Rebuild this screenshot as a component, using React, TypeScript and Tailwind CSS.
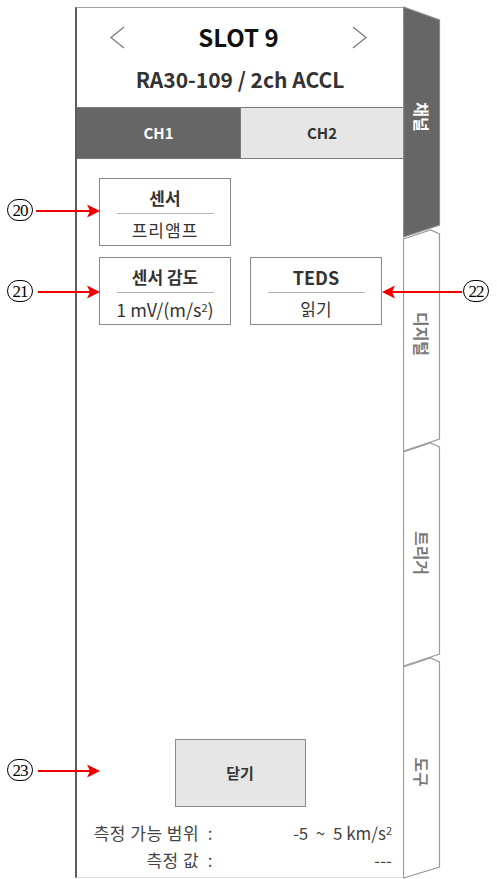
import type { ReactNode } from 'react'

const font = { fontFamily: '"Noto Sans CJK KR", "Noto Sans", sans-serif' }

const sideTabs = [
  { label: '채널', points: '0.5,7 36.5,20 36.5,225 0.5,237', cy: 117, active: true },
  { label: '디지털', points: '0.5,239 27.5,230 36.5,234 36.5,439 0.5,451', cy: 334, active: false },
  { label: '트리거', points: '0.5,452 27.5,443 36.5,447 36.5,654 0.5,666', cy: 553, active: false },
  { label: '도구', points: '0.5,667 27.5,658 36.5,662 36.5,867 0.5,878', cy: 772, active: false },
]

function Chevron({ dir }: { dir: 'left' | 'right' }) {
  return (
    <svg width="15" height="23" viewBox="0 0 15 23" className="shrink-0">
      <polyline
        points={dir === 'left' ? '14,1 1,11.5 14,22' : '1,1 14,11.5 1,22'}
        fill="none"
        stroke="#7a7a7a"
        strokeWidth="1.3"
      />
    </svg>
  )
}

function InfoBox({ title, value, titleClass = 'text-[17px]' }: { title: string; value: ReactNode; titleClass?: string }) {
  return (
    <div className="flex h-[68px] w-[132px] flex-col items-center border border-[#8a8a8a] bg-white pt-[8px]">
      <p className={`h-[22px] font-bold leading-[22px] text-[#333] ${titleClass}`}>{title}</p>
      <div className="mt-[4px] h-px w-[97px] bg-[#b5b5b5]" />
      <div className="mt-[5px] h-[22px] text-[17px] leading-[22px] text-[#333]">{value}</div>
    </div>
  )
}

function Marker({ num, x, y }: { num: string; x: number; y: number }) {
  return (
    <div
      className="absolute flex h-[22px] w-[26px] items-center justify-center rounded-full border border-black bg-white"
      style={{ left: x, top: y - 11 }}
    >
      <span className="text-[17px] leading-none tracking-[-1px] text-black" style={{ fontFamily: '"Liberation Serif", serif' }}>
        {num}
      </span>
    </div>
  )
}

function Arrow({ from, to, y }: { from: number; to: number; y: number }) {
  const left = Math.min(from, to)
  const w = Math.abs(to - from)
  const pointsRight = to > from
  return (
    <svg className="absolute" width={w} height="16" style={{ left, top: y - 8 }}>
      {pointsRight ? (
        <>
          <line x1="0" y1="8" x2={w - 10} y2="8" stroke="#f00000" strokeWidth="2" />
          <polygon points={`${w - 13},1.5 ${w},8 ${w - 13},14.5 ${w - 10},8`} fill="#f00000" />
        </>
      ) : (
        <>
          <line x1="10" y1="8" x2={w} y2="8" stroke="#f00000" strokeWidth="2" />
          <polygon points="13,1.5 0,8 13,14.5 10,8" fill="#f00000" />
        </>
      )}
    </svg>
  )
}

export default function App() {
  return (
    <div className="relative flex h-[879px] w-[497px] overflow-hidden bg-white" style={font}>
      <div className="w-[75px] shrink-0" />

      <div className="mt-[7px] flex h-[871px] w-[328px] shrink-0 flex-col border-b border-l-2 border-t border-b-[#dddddd] border-l-[#5e5e5e] border-t-[#a0a0a0]">
        <header className="h-[99px] shrink-0">
          <div className="mt-[13px] flex h-[32px] items-center justify-between pl-[33px] pr-[36px]">
            <Chevron dir="left" />
            <h1 className="text-[24px] font-bold leading-[32px] text-[#111]">SLOT 9</h1>
            <Chevron dir="right" />
          </div>
          <p className="mt-[12px] text-center text-[21px] font-bold leading-[28px] text-[#333]">RA30-109 / 2ch ACCL</p>
        </header>

        <div className="flex h-[52px] shrink-0 border-y border-[#7a7a7a]">
          <div className="flex w-[163px] items-center justify-center bg-[#666666] text-[15px] font-bold text-white">CH1</div>
          <div className="flex flex-1 items-center justify-center border-l border-[#7a7a7a] bg-[#e6e6e6] text-[15px] font-bold text-[#333]">CH2</div>
        </div>

        <div className="pl-[22px] pt-[19px]">
          <InfoBox title="센서" value={<span className="tracking-[1px]">프리앰프</span>} />
          <div className="mt-[11px] flex gap-[19px]">
            <InfoBox
              title="센서 감도"
              value={
                <span className="text-[18px]">
                  1 mV/(m/s<sup className="text-[11px]">2</sup>)
                </span>
              }
            />
            <InfoBox title="TEDS" titleClass="text-[18px]" value="읽기" />
          </div>
        </div>

        <div className="flex-1" />

        <button
          type="button"
          className="mx-auto flex h-[68px] w-[131px] shrink-0 items-center justify-center border border-[#8a8a8a] bg-[#e6e6e6] text-[15px] font-bold text-[#333]"
        >
          닫기
        </button>

        <div className="mb-[4px] mt-[12px] grid grid-cols-[136px_1fr] pr-[11px] text-[17px] leading-[27px] text-[#444]">
          <span className="text-right tracking-[0.5px]">측정 가능 범위&nbsp; :</span>
          <span className="text-right">
            -5&nbsp;&nbsp;~&nbsp;&nbsp;5 km/s<sup className="text-[11px]">2</sup>
          </span>
          <span className="text-right tracking-[0.5px]">측정 값&nbsp; :</span>
          <span className="text-right">---</span>
        </div>
      </div>

      <svg width="40" height="879" className="shrink-0">
        {sideTabs.map((t) => (
          <g key={t.label}>
            <polygon points={t.points} fill={t.active ? '#666666' : '#ffffff'} stroke={t.active ? '#8a8a8a' : '#9a9a9a'} strokeWidth="1.2" />
            <text
              x="18.5"
              y={t.cy}
              transform={`rotate(90 18.5 ${t.cy})`}
              textAnchor="middle"
              dominantBaseline="central"
              fontSize="16"
              fontWeight="700"
              fill={t.active ? '#ffffff' : '#7a7a7a'}
              style={font}
            >
              {t.label}
            </text>
          </g>
        ))}
      </svg>

      <Marker num="20" x={7} y={210} />
      <Arrow from={36} to={100} y={211} />
      <Marker num="21" x={7} y={291} />
      <Arrow from={38} to={100} y={292} />
      <Marker num="22" x={463} y={291} />
      <Arrow from={462} to={382} y={292} />
      <Marker num="23" x={7} y={770} />
      <Arrow from={38} to={100} y={771} />
    </div>
  )
}
